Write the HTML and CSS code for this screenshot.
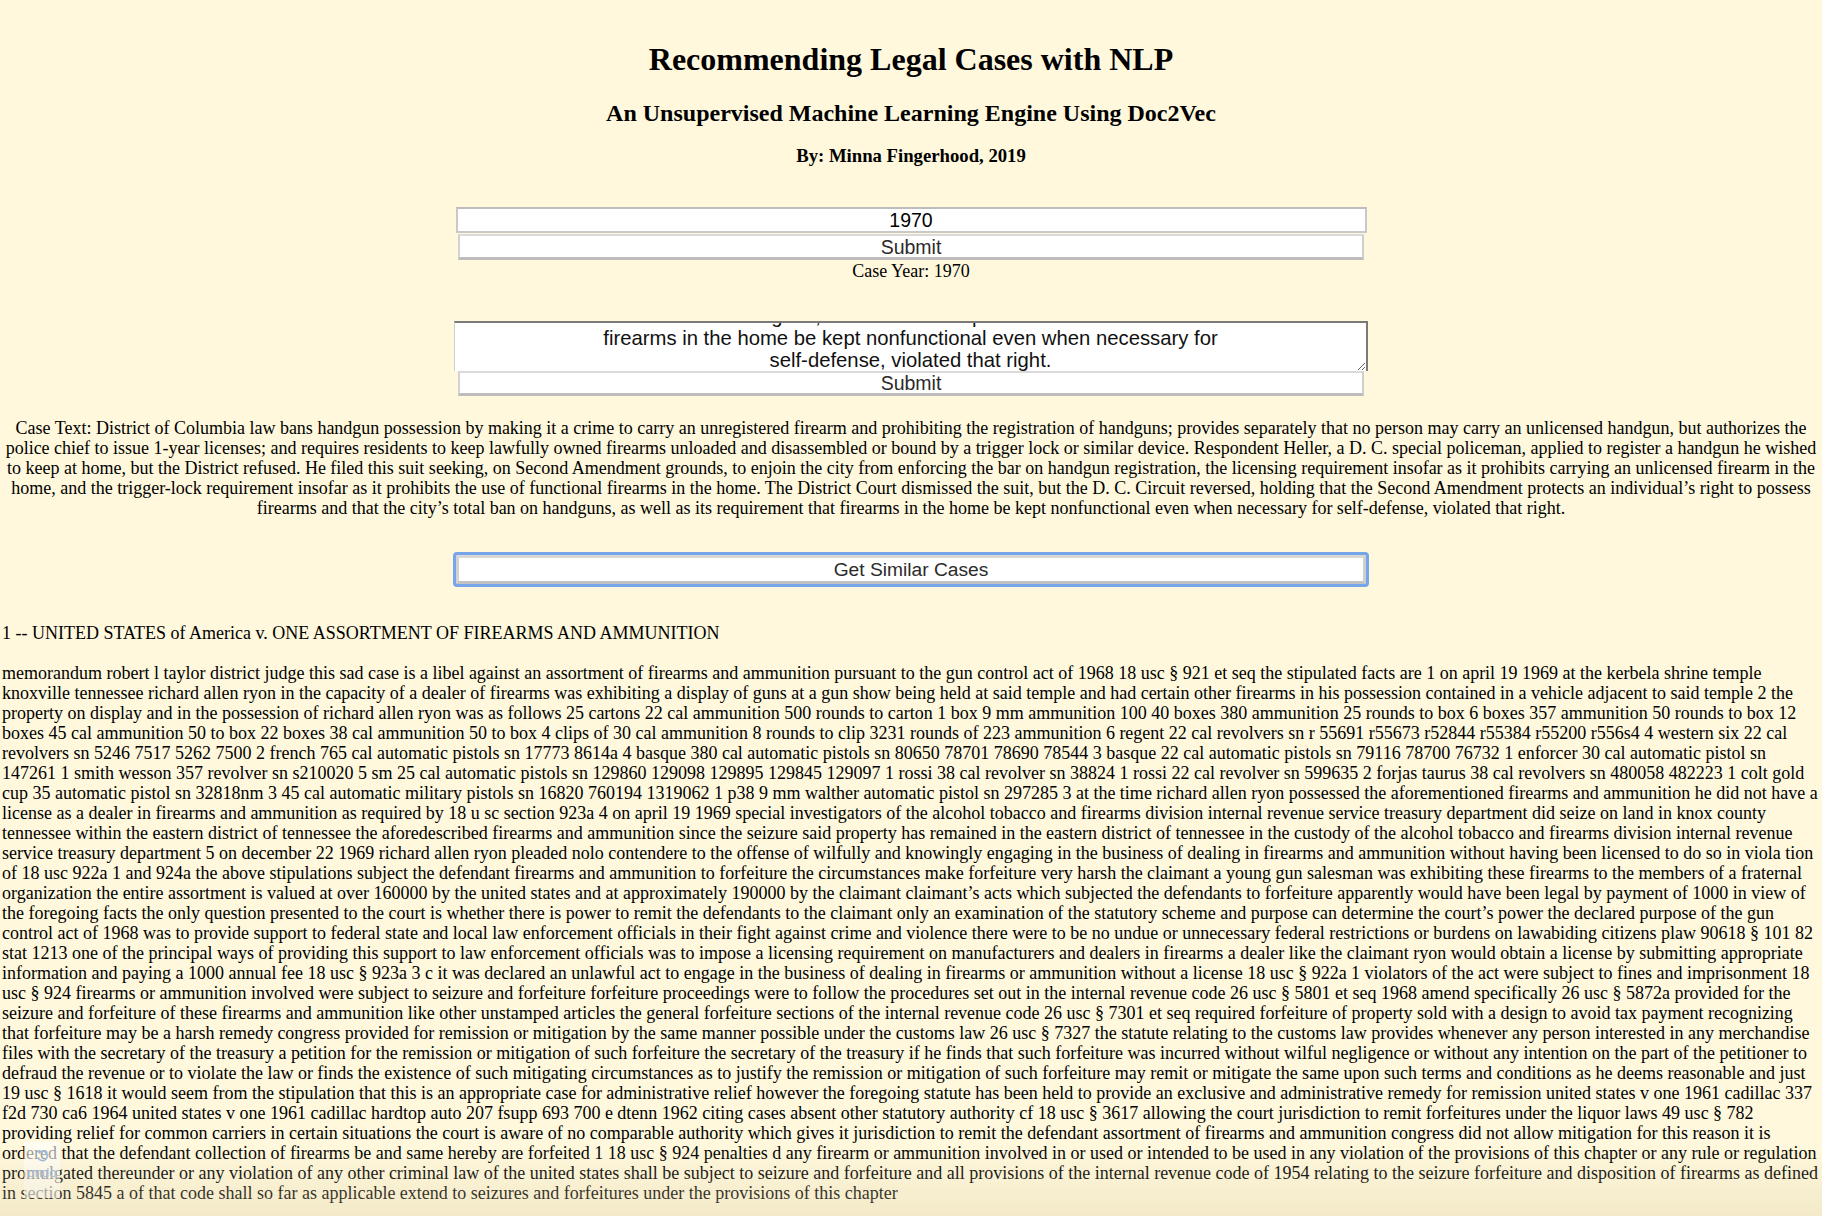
FILE: index.html
```html
<!DOCTYPE html>
<html lang="en">
<head>
<meta charset="utf-8">
<title>Recommending Legal Cases with NLP</title>
<link rel="stylesheet" href="styles.css">
</head>
<body>
<div class="page">
  <header class="masthead">
    <h1 class="title">Recommending Legal Cases with NLP</h1>
    <h2 class="subtitle">An Unsupervised Machine Learning Engine Using Doc2Vec</h2>
    <h3 class="byline">By: Minna Fingerhood, 2019</h3>
  </header>

  <form class="year-form">
    <input class="year-input" type="text" value="1970">
    <button class="submit-btn" type="button">Submit</button>
    <div class="case-year">Case Year: 1970</div>
  </form>

  <form class="text-form">
    <textarea class="case-input">District of Columbia law bans handgun possession by making it a crime to carry an unregistered firearm and prohibiting the registration of handguns; provides separately that no person may carry an unlicensed handgun, but authorizes the police chief to issue 1-year licenses; and requires residents to keep lawfully owned firearms unloaded and disassembled or bound by a trigger lock or similar device. Respondent Heller, a D. C. special policeman, applied to register a handgun he wished to keep at home, but the District refused. He filed this suit seeking, on Second Amendment grounds, to enjoin the city from enforcing the bar on handgun registration, the licensing requirement insofar as it prohibits carrying an unlicensed firearm in the home, and the trigger-lock requirement insofar as it prohibits the use of functional firearms in the home. The District Court dismissed the suit, but the D. C. Circuit reversed, holding that the Second Amendment protects an individual’s right to possess firearms and that the city’s total ban on handguns, as well as its requirement that
firearms in the home be kept nonfunctional even when necessary for self-defense, violated that right.</textarea>
    <button class="submit-btn submit-btn--text" type="button">Submit</button>
  </form>

  <p class="case-text">Case Text: District of Columbia law bans handgun possession by making it a crime to carry an unregistered firearm and prohibiting the registration of handguns; provides separately that no person may carry an unlicensed handgun, but authorizes the police chief to issue 1-year licenses; and requires residents to keep lawfully owned firearms unloaded and disassembled or bound by a trigger lock or similar device. Respondent Heller, a D. C. special policeman, applied to register a handgun he wished to keep at home, but the District refused. He filed this suit seeking, on Second Amendment grounds, to enjoin the city from enforcing the bar on handgun registration, the licensing requirement insofar as it prohibits carrying an unlicensed firearm in the home, and the trigger-lock requirement insofar as it prohibits the use of functional firearms in the home. The District Court dismissed the suit, but the D. C. Circuit reversed, holding that the Second Amendment protects an individual’s right to possess firearms and that the city’s total ban on handguns, as well as its requirement that firearms in the home be kept nonfunctional even when necessary for self-defense, violated that right.</p>

  <div class="similar">
    <button class="similar-btn" type="button">Get Similar Cases</button>
  </div>

  <section class="results">
    <p class="result-title">1 -- UNITED STATES of America v. ONE ASSORTMENT OF FIREARMS AND AMMUNITION</p>
    <p class="result-body">memorandum robert l taylor district judge this sad case is a libel against an assortment of firearms and ammunition pursuant to the gun control act of 1968 18 usc § 921 et seq the stipulated facts are 1 on april 19 1969 at the kerbela shrine temple knoxville tennessee richard allen ryon in the capacity of a dealer of firearms was exhibiting a display of guns at a gun show being held at said temple and had certain other firearms in his possession contained in a vehicle adjacent to said temple 2 the property on display and in the possession of richard allen ryon was as follows 25 cartons 22 cal ammunition 500 rounds to carton 1 box 9 mm ammunition 100 40 boxes 380 ammunition 25 rounds to box 6 boxes 357 ammunition 50 rounds to box 12 boxes 45 cal ammunition 50 to box 22 boxes 38 cal ammunition 50 to box 4 clips of 30 cal ammunition 8 rounds to clip 3231 rounds of 223 ammunition 6 regent 22 cal revolvers sn r 55691 r55673 r52844 r55384 r55200 r556s4 4 western six 22 cal revolvers sn 5246 7517 5262 7500 2 french 765 cal automatic pistols sn 17773 8614a 4 basque 380 cal automatic pistols sn 80650 78701 78690 78544 3 basque 22 cal automatic pistols sn 79116 78700 76732 1 enforcer 30 cal automatic pistol sn 147261 1 smith wesson 357 revolver sn s210020 5 sm 25 cal automatic pistols sn 129860 129098 129895 129845 129097 1 rossi 38 cal revolver sn 38824 1 rossi 22 cal revolver sn 599635 2 forjas taurus 38 cal revolvers sn 480058 482223 1 colt gold cup 35 automatic pistol sn 32818nm 3 45 cal automatic military pistols sn 16820 760194 1319062 1 p38 9 mm walther automatic pistol sn 297285 3 at the time richard allen ryon possessed the aforementioned firearms and ammunition he did not have a license as a dealer in firearms and ammunition as required by 18 u sc section 923a 4 on april 19 1969 special investigators of the alcohol tobacco and firearms division internal revenue service treasury department did seize on land in knox county tennessee within the eastern district of tennessee the aforedescribed firearms and ammunition since the seizure said property has remained in the eastern district of tennessee in the custody of the alcohol tobacco and firearms division internal revenue service treasury department 5 on december 22 1969 richard allen ryon pleaded nolo contendere to the offense of wilfully and knowingly engaging in the business of dealing in firearms and ammunition without having been licensed to do so in viola tion of 18 usc 922a 1 and 924a the above stipulations subject the defendant firearms and ammunition to forfeiture the circumstances make forfeiture very harsh the claimant a young gun salesman was exhibiting these firearms to the members of a fraternal organization the entire assortment is valued at over 160000 by the united states and at approximately 190000 by the claimant claimant’s acts which subjected the defendants to forfeiture apparently would have been legal by payment of 1000 in view of the foregoing facts the only question presented to the court is whether there is power to remit the defendants to the claimant only an examination of the statutory scheme and purpose can determine the court’s power the declared purpose of the gun control act of 1968 was to provide support to federal state and local law enforcement officials in their fight against crime and violence there were to be no undue or unnecessary federal restrictions or burdens on lawabiding citizens plaw 90618 § 101 82 stat 1213 one of the principal ways of providing this support to law enforcement officials was to impose a licensing requirement on manufacturers and dealers in firearms a dealer like the claimant ryon would obtain a license by submitting appropriate information and paying a 1000 annual fee 18 usc § 923a 3 c it was declared an unlawful act to engage in the business of dealing in firearms or ammunition without a license 18 usc § 922a 1 violators of the act were subject to fines and imprisonment 18 usc § 924 firearms or ammunition involved were subject to seizure and forfeiture forfeiture proceedings were to follow the procedures set out in the internal revenue code 26 usc § 5801 et seq 1968 amend specifically 26 usc § 5872a provided for the seizure and forfeiture of these firearms and ammunition like other unstamped articles the general forfeiture sections of the internal revenue code 26 usc § 7301 et seq required forfeiture of property sold with a design to avoid tax payment recognizing that forfeiture may be a harsh remedy congress provided for remission or mitigation by the same manner possible under the customs law 26 usc § 7327 the statute relating to the customs law provides whenever any person interested in any merchandise files with the secretary of the treasury a petition for the remission or mitigation of such forfeiture the secretary of the treasury if he finds that such forfeiture was incurred without wilful negligence or without any intention on the part of the petitioner to defraud the revenue or to violate the law or finds the existence of such mitigating circumstances as to justify the remission or mitigation of such forfeiture may remit or mitigate the same upon such terms and conditions as he deems reasonable and just 19 usc § 1618 it would seem from the stipulation that this is an appropriate case for administrative relief however the foregoing statute has been held to provide an exclusive and administrative remedy for remission united states v one 1961 cadillac 337 f2d 730 ca6 1964 united states v one 1961 cadillac hardtop auto 207 fsupp 693 700 e dtenn 1962 citing cases absent other statutory authority cf 18 usc § 3617 allowing the court jurisdiction to remit forfeitures under the liquor laws 49 usc § 782 providing relief for common carriers in certain situations the court is aware of no comparable authority which gives it jurisdiction to remit the defendant assortment of firearms and ammunition congress did not allow mitigation for this reason it is ordered that the defendant collection of firearms be and same hereby are forfeited 1 18 usc § 924 penalties d any firearm or ammunition involved in or used or intended to be used in any violation of the provisions of this chapter or any rule or regulation promulgated thereunder or any violation of any other criminal law of the united states shall be subject to seizure and forfeiture and all provisions of the internal revenue code of 1954 relating to the seizure forfeiture and disposition of firearms as defined in section 5845 a of that code shall so far as applicable extend to seizures and forfeitures under the provisions of this chapter</p>
  </section>
</div>

<div class="undo-badge">
  <svg class="undo-icon" viewBox="0 0 16 16" width="15" height="15" aria-hidden="true">
    <path d="M4.2 5.2 A5 5 0 1 1 3.3 10" fill="none" stroke="#9db9dc" stroke-width="1.7"/>
    <path d="M1.6 3.2 L5.4 6.6 L6 2.2 Z" fill="#9db9dc"/>
  </svg>
  <span class="undo-label">undo</span>
</div>
<div class="vignette"></div>

<script src="script.js"></script>
</body>
</html>
```

FILE: styles.css
```css
html {
  background: #fff8dc;
}

body {
  margin: 0;
  background: #fff8dc;
  color: #000;
  font-family: "Liberation Serif", "Times New Roman", serif;
  font-size: 18px;
  line-height: 20px;
}

.page {
  position: relative;
}

/* ---------- masthead ---------- */
.masthead {
  padding-top: 41px;
  text-align: center;
}

.title {
  margin: 0 0 21px;
  font-size: 32px;
  line-height: 37px;
  font-weight: bold;
}

.subtitle {
  margin: 0 0 18px;
  font-size: 24px;
  line-height: 28px;
  font-weight: bold;
}

.byline {
  margin: 0;
  font-size: 18.72px;
  line-height: 22px;
  font-weight: bold;
}

/* ---------- forms ---------- */
.year-form,
.text-form {
  display: flex;
  flex-direction: column;
  align-items: center;
  margin: 0;
}

.year-form {
  margin-top: 40px;
  gap: 1px;
}

.year-input {
  box-sizing: border-box;
  width: 911px;
  height: 26px;
  margin: 0;
  padding: 0 2px;
  border: 2px solid #c9c9c9;
  border-top-color: #bdbdbd;
  background: #fff;
  font-family: "Liberation Sans", Arial, sans-serif;
  font-size: 19.5px;
  color: #000;
  text-align: center;
}

.submit-btn {
  box-sizing: border-box;
  width: 906px;
  height: 26px;
  margin: 0;
  padding: 0;
  background: #fff;
  border-style: solid;
  border-width: 2px 2px 3px 2px;
  border-color: #dadada #cfcfcf #bdbdbd #d2d2d2;
  font-family: "Liberation Sans", Arial, sans-serif;
  font-size: 19.5px;
  line-height: 20px;
  color: #2b2b2b;
}

.case-year {
  text-align: center;
  line-height: 20px;
}

.text-form {
  margin-top: 40px;
  gap: 0;
}

.case-input {
  box-sizing: border-box;
  width: 914px;
  height: 50px;
  margin: 0;
  padding: 0 135px;
  border-style: solid;
  border-width: 2px 2px 0 1px;
  border-color: #7a7a7a #7a7a7a #d0d0d0 #cfcfcf;
  background: #fff;
  font-family: "Liberation Sans", Arial, sans-serif;
  font-size: 20.3px;
  line-height: 22px;
  color: #111;
  text-align: center;
  overflow: hidden;
  resize: both;
}

.submit-btn--text {
  height: 25px;
}

/* ---------- case text ---------- */
.case-text {
  margin: 22px 0 0;
  padding: 0 2px;
  text-align: center;
  line-height: 20px;
}

/* ---------- similar cases button ---------- */
.similar {
  display: flex;
  justify-content: center;
  margin-top: 37px;
}

.similar-btn {
  box-sizing: border-box;
  width: 910px;
  height: 29px;
  margin: 0;
  padding: 0;
  background: #fff;
  border-style: solid;
  border-width: 3px;
  border-color: #d8d8d8 #cfcfcf #c2c2c2 #d2d2d2;
  outline: 3px solid #76a5ea;
  outline-offset: 0;
  border-radius: 1px;
  font-family: "Liberation Sans", Arial, sans-serif;
  font-size: 19.2px;
  line-height: 20px;
  color: #2b2b2b;
}

/* ---------- results ---------- */
.results {
  margin-top: 39px;
  padding: 0 2px;
}

.result-title {
  margin: 0;
  line-height: 20px;
}

.result-body {
  margin: 20px 0 0;
  line-height: 20px;
}

/* ---------- overlays ---------- */
.undo-badge {
  position: absolute;
  left: 24px;
  top: 1142px;
  width: 36px;
  height: 56px;
  display: flex;
  flex-direction: column;
  align-items: center;
  padding-top: 6px;
  box-sizing: border-box;
  background: rgba(255, 255, 255, 0.6);
  gap: 3px;
}

.undo-label {
  font-family: "Liberation Sans", Arial, sans-serif;
  font-size: 13px;
  line-height: 14px;
  color: #9db9dc;
}

.vignette {
  position: fixed;
  left: 0;
  right: 0;
  bottom: 0;
  height: 70px;
  pointer-events: none;
  background: linear-gradient(to bottom, rgba(225, 210, 170, 0), rgba(222, 208, 168, 0.35));
}
```

FILE: script.js
```js
document.querySelectorAll('.case-input').forEach(function (ta) {
  ta.scrollTop = ta.scrollHeight;
});
```
